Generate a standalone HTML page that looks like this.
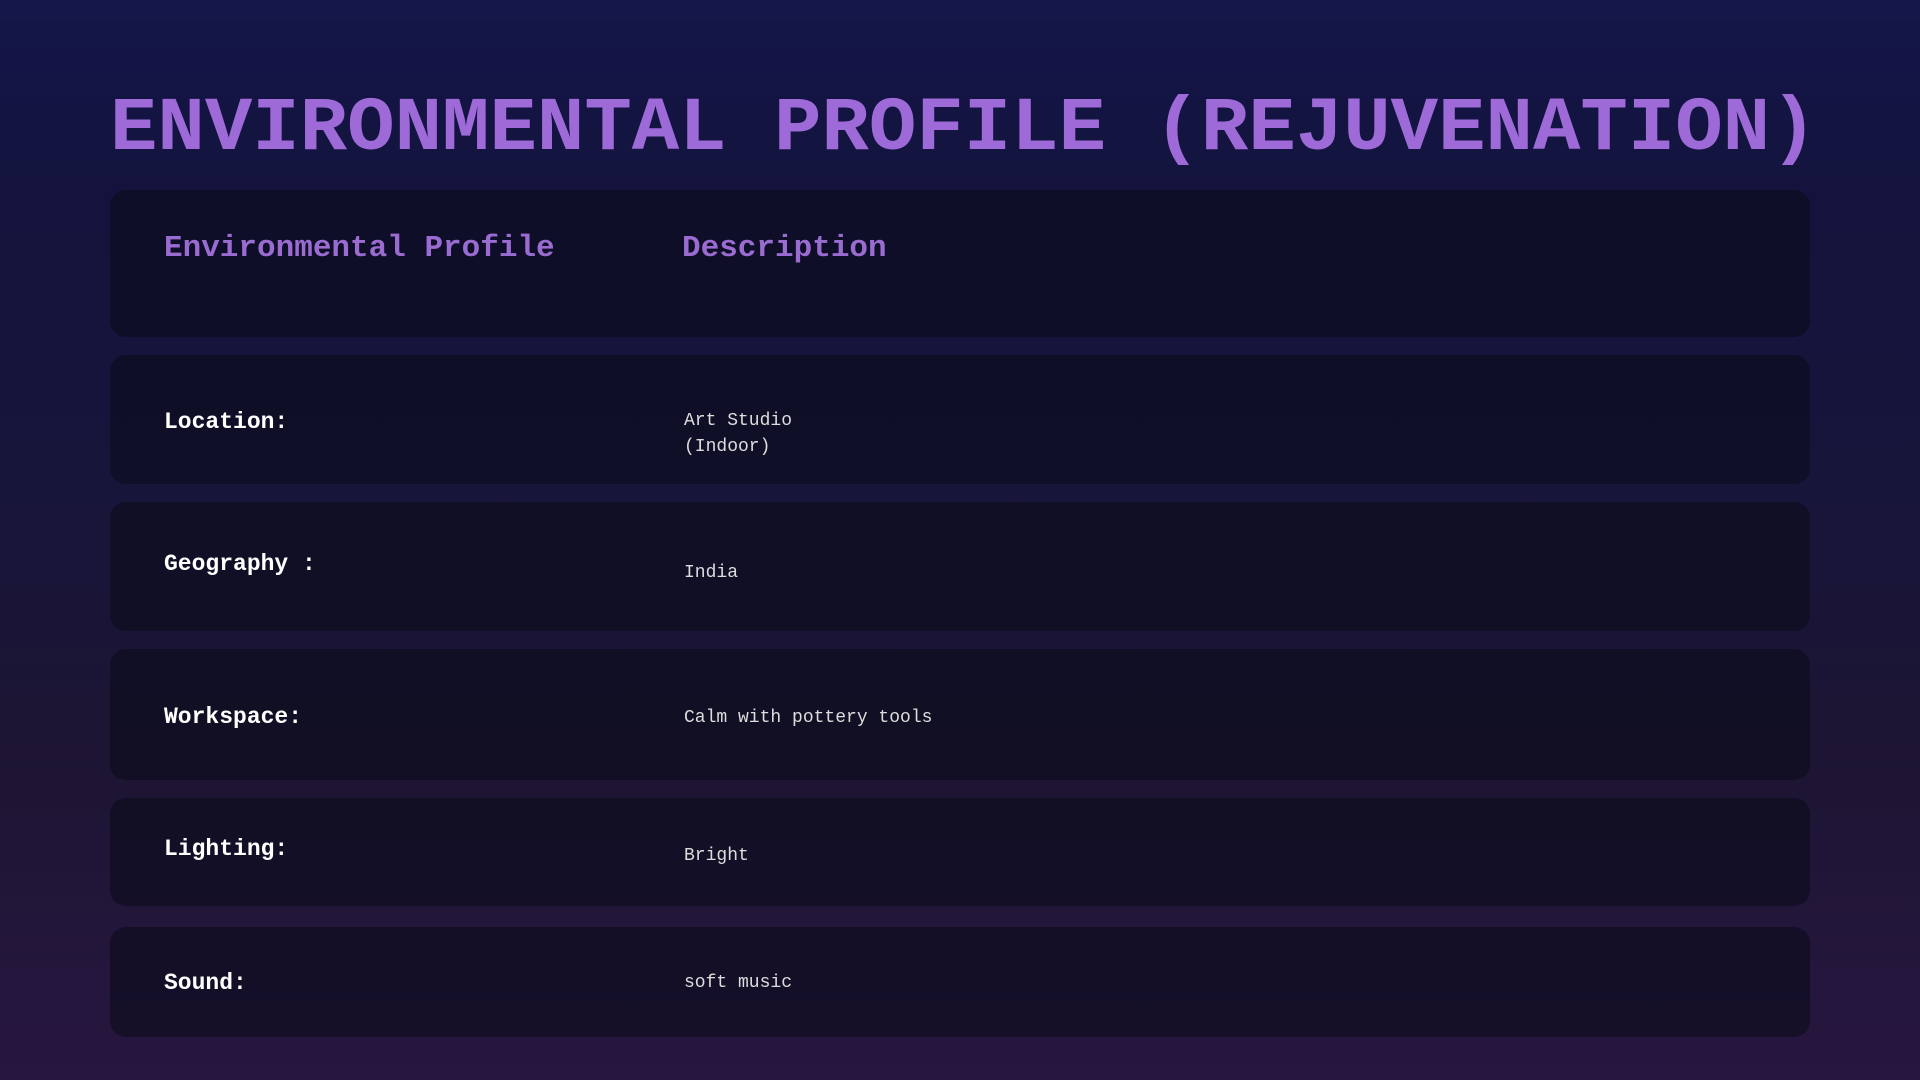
<!DOCTYPE html>
<html><head><meta charset="utf-8"><style>
html,body{margin:0;padding:0}
body{width:1920px;height:1080px;overflow:hidden;background:linear-gradient(180deg,#15164a 0%,#13133d 18%,#17153a 45%,#1d1533 70%,#271640 100%);font-family:"Liberation Mono",monospace;position:relative}
h1{position:absolute;left:110px;top:84px;margin:0;font-family:"Liberation Mono",monospace;font-weight:bold;font-size:76px;line-height:90px;color:#9d6ad8;white-space:nowrap;transform:scaleX(1.04);transform-origin:top left}
.card{position:absolute;left:110px;width:1700px;background:rgba(12,11,28,0.62);border-radius:16px}
.lab{position:absolute;left:54px;color:#fff;font-weight:bold;font-size:23px}
.val{position:absolute;left:574px;color:#ddd;font-size:18px;line-height:26px}
.hd{position:absolute;color:#9a6bd0;font-weight:bold;font-size:31px;top:41px}
</style></head><body>
<h1>ENVIRONMENTAL PROFILE (REJUVENATION)</h1>
<div class="card" style="top:190px;height:147px"><div class="hd" style="left:54px">Environmental Profile</div><div class="hd" style="left:572px">Description</div></div>
<div class="card" style="top:355px;height:129px"><div class="lab" style="top:54px">Location:</div><div class="val" style="top:53px">Art Studio<br>(Indoor)</div></div>
<div class="card" style="top:502px;height:129px"><div class="lab" style="top:49px">Geography :</div><div class="val" style="top:58px">India</div></div>
<div class="card" style="top:649px;height:131px"><div class="lab" style="top:55px">Workspace:</div><div class="val" style="top:56px">Calm with pottery tools</div></div>
<div class="card" style="top:798px;height:108px"><div class="lab" style="top:38px">Lighting:</div><div class="val" style="top:45px">Bright</div></div>
<div class="card" style="top:927px;height:110px"><div class="lab" style="top:43px">Sound:</div><div class="val" style="top:43px">soft music</div></div>
</body></html>
